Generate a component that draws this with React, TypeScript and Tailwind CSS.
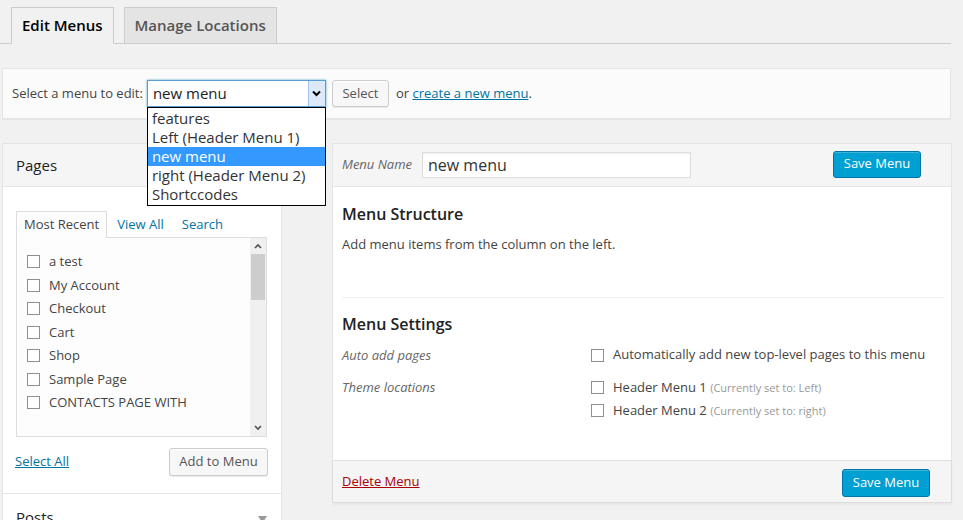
import React from "react";

function Check() {
  return <span className="inline-block w-[13px] h-[13px] border border-[#8c8f94] bg-white shrink-0" />;
}

function Chevron({ up }: { up?: boolean }) {
  return (
    <svg width="8" height="6" viewBox="0 0 8 6" className="block">
      <polyline
        points={up ? "1,5 4,2 7,5" : "1,1 4,4 7,1"}
        fill="none"
        stroke="#505050"
        strokeWidth="1.6"
      />
    </svg>
  );
}

const pages = ["a test", "My Account", "Checkout", "Cart", "Shop", "Sample Page", "CONTACTS PAGE WITH"];
const menus = ["features", "Left (Header Menu 1)", "new menu", "right (Header Menu 2)", "Shortccodes"];

export default function App() {
  return (
    <div className="w-[963px] h-[520px] overflow-hidden bg-[#f1f1f1] font-['Open_Sans',sans-serif] text-[13px] text-[#444]">
      {/* TABS */}
      <div className="flex items-end gap-[10px] pt-[7px] pl-[11px] mr-[12px] border-b border-[#ccc]">
        <div className="h-[37px] -mb-px px-[10px] flex items-center border border-[#ccc] border-b-[#f1f1f1] bg-[#f1f1f1] text-[15px] font-semibold text-[#000]">
          Edit Menus
        </div>
        <div className="h-[36px] px-[10px] flex items-center border border-b-0 border-[#ccc] bg-[#e4e4e4] text-[15px] font-semibold text-[#555]">
          Manage Locations
        </div>
      </div>

      {/* MANAGE BAR */}
      <div className="mt-[24px] ml-[2px] mr-[12px] h-[51px] border border-[#e5e5e5] bg-[#fbfbfb] shadow-[0_1px_1px_rgba(0,0,0,0.04)] flex items-center px-[9px]">
        <span>Select a menu to edit:</span>
        <div className="relative ml-[4px]">
          <div className="w-[179px] h-[27px] border border-[#5b9dd9] shadow-[0_0_2px_rgba(30,140,190,0.8)] bg-white flex">
            <span className="flex-1 pl-[5px] text-[15px] leading-[25px] text-[#222]">new menu</span>
            <span className="w-[17px] h-full bg-[#dbe9f9] border-l border-[#9cc4ec] flex items-center justify-center">
              <svg width="9" height="7" viewBox="0 0 9 7">
                <polyline points="1,1.5 4.5,5 8,1.5" fill="none" stroke="#000" strokeWidth="2" />
              </svg>
            </span>
          </div>
          {/* DROPDOWN */}
          <div className="absolute left-0 top-[27px] w-[179px] border border-black bg-white z-10 py-px">
            {menus.map((m) => (
              <div
                key={m}
                className={
                  "h-[19px] pl-[4px] text-[15px] leading-[19px] " +
                  (m === "new menu" ? "bg-[#3399ff] text-white" : "text-[#333]")
                }
              >
                {m}
              </div>
            ))}
          </div>
        </div>
        <button className="ml-[6px] h-[27px] w-[57px] border border-[#ccc] bg-[#f7f7f7] rounded-[3px] text-[#555] shadow-[0_1px_0_#fff_inset,0_1px_0_rgba(0,0,0,0.08)]">
          Select
        </button>
        <span className="ml-[7px]">
          or <span className="text-[#0074a2] underline">create a new menu</span>.
        </span>
      </div>

      {/* COLUMNS */}
      <div className="flex mt-[24px]">
        {/* LEFT */}
        <div className="ml-[2px] w-[280px] border border-[#e5e5e5] bg-white shrink-0">
          <div className="h-[43px] bg-[#f5f5f5] border-b border-[#e5e5e5] flex items-center pl-[13px] text-[15px] text-[#222]">
            Pages
          </div>
          <div className="pt-[24px] px-[13px] pb-[17px] border-b border-[#e5e5e5]">
            <div className="flex items-end">
              <div className="h-[27px] relative z-10 px-[7px] border border-b-0 border-[#ddd] bg-[#fdfdfd] flex items-center text-[#444]">
                Most Recent
              </div>
              <span className="h-[26px] ml-[10px] flex items-center text-[#0074a2]">View All</span>
              <span className="h-[26px] ml-[18px] flex items-center text-[#0074a2]">Search</span>
            </div>
            <div className="-mt-px w-[251px] h-[200px] border border-[#ddd] bg-[#fdfdfd] flex">
              <div className="flex-1 pl-[10px] pt-[12px]">
                <div className="h-[165px] overflow-hidden">
                  {pages.map((p) => (
                    <div key={p} className="h-[23.5px] flex items-center gap-[9px]">
                      <Check />
                      <span>{p}</span>
                    </div>
                  ))}
                </div>
              </div>
              <div className="w-[16px] bg-[#f0f0f0] flex flex-col">
                <div className="h-[16px] flex items-center justify-center">
                  <Chevron up />
                </div>
                <div className="h-[46px] mx-px bg-[#cdcdcd]" />
                <div className="flex-1" />
                <div className="h-[16px] flex items-center justify-center">
                  <Chevron />
                </div>
              </div>
            </div>
            <div className="mt-[11px] flex items-center justify-between">
              <span className="text-[#0074a2] underline -ml-px">Select All</span>
              <button className="h-[28px] w-[99px] border border-[#ccc] bg-[#f7f7f7] rounded-[3px] text-[#555] shadow-[0_1px_0_#fff_inset,0_1px_0_rgba(0,0,0,0.08)]">
                Add to Menu
              </button>
            </div>
          </div>
          <div className="h-[43px] flex items-center justify-between pl-[13px] pr-[14px] text-[15px] text-[#222]">
            <span className="mt-[4px]">Posts</span>
            <svg width="9" height="7" viewBox="0 0 9 7" className="mt-[8px]">
              <polygon points="0,0 9,0 4.5,7" fill="#999" />
            </svg>
          </div>
        </div>

        {/* RIGHT */}
        <div className="ml-[50px] w-[620px] shrink-0">
          <div className="h-[44px] bg-[#f5f5f5] border border-[#e5e5e5] flex items-center pl-[9px] pr-[30px]">
            <span className="italic text-[#666]">Menu Name</span>
            <div className="ml-[10px] w-[269px] h-[26px] border border-[#ddd] bg-white shadow-[inset_0_1px_2px_rgba(0,0,0,0.07)] pl-[5px] text-[16px] leading-[24px] text-[#333]">
              new menu
            </div>
            <button className="ml-auto -mt-[2px] h-[27px] w-[88px] rounded-[3px] border border-[#0073aa] bg-[#00a0d2] text-white shadow-[inset_0_1px_0_rgba(120,200,230,0.5)]">
              Save Menu
            </button>
          </div>
          <div className="h-[273px] bg-white border-x border-[#e5e5e5] px-[9px] pt-[16px]">
            <div className="text-[16px] leading-[22px] font-semibold text-[#222]">Menu Structure</div>
            <p className="mt-[9px] leading-[20px]">Add menu items from the column on the left.</p>
            <div className="mt-[43px] mr-[-2px] border-t border-[#eee]" />
            <div className="mt-[15px] text-[16px] leading-[22px] font-semibold text-[#222]">Menu Settings</div>
            <div className="mt-[10px] flex">
              <div className="w-[249px] italic text-[#666] leading-[20px]">Auto add pages</div>
              <div className="flex items-center gap-[9px] h-[20px]">
                <Check />
                <span>Automatically add new top-level pages to this menu</span>
              </div>
            </div>
            <div className="mt-[12px] flex">
              <div className="w-[249px] italic text-[#666] leading-[20px]">Theme locations</div>
              <div className="flex flex-col">
                <div className="flex items-center gap-[9px] h-[23px] -mt-[1px]">
                  <Check />
                  <span>
                    Header Menu 1 <span className="text-[11px] text-[#999]">(Currently set to: Left)</span>
                  </span>
                </div>
                <div className="flex items-center gap-[9px] h-[23px]">
                  <Check />
                  <span>
                    Header Menu 2 <span className="text-[11px] text-[#999]">(Currently set to: right)</span>
                  </span>
                </div>
              </div>
            </div>
          </div>
          <div className="h-[43px] bg-[#f5f5f5] border border-[#ddd] border-t-[#dfdfdf] shadow-[0_2px_2px_rgba(0,0,0,0.04)] flex items-center pl-[9px] pr-[21px]">
            <span className="text-[#a00] underline">Delete Menu</span>
            <button className="ml-auto mt-[2px] h-[28px] w-[88px] rounded-[3px] border border-[#0073aa] bg-[#00a0d2] text-white shadow-[inset_0_1px_0_rgba(120,200,230,0.5)]">
              Save Menu
            </button>
          </div>
        </div>
      </div>
    </div>
  );
}
